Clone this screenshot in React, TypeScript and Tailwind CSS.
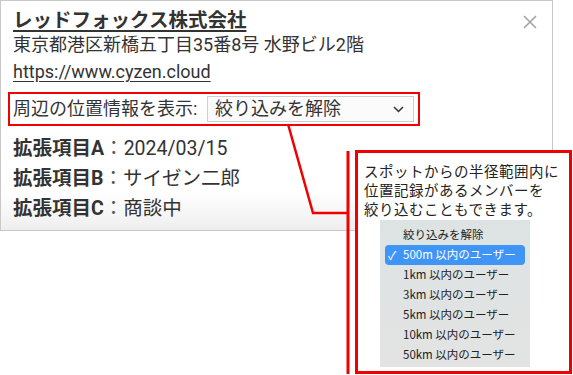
import React from 'react';

const fields = [
  { label: '拡張項目A', value: '2024/03/15' },
  { label: '拡張項目B', value: 'サイゼン二郎' },
  { label: '拡張項目C', value: '商談中' },
];

const options = [
  '絞り込みを解除',
  '500m 以内のユーザー',
  '1km 以内のユーザー',
  '3km 以内のユーザー',
  '5km 以内のユーザー',
  '10km 以内のユーザー',
  '50km 以内のユーザー',
];

const App = () => {
  return (
    <div className="relative w-[573px] h-[375px] bg-white overflow-hidden text-[#333] font-['Roboto','Noto_Sans_CJK_JP',sans-serif]">
      {/* info card */}
      <div className="w-[553px] h-[231px] border border-[#c9c9c9] bg-linear-to-b from-white from-[84%] to-[#eeeeee] px-[12px] pt-[8px]">
        <h1 className="text-[19.5px] leading-[24px] font-bold underline underline-offset-[3px] decoration-[1.5px]">
          レッドフォックス株式会社
        </h1>
        <p className="text-[18px] leading-[24px] whitespace-nowrap">東京都港区新橋五丁目35番8号 水野ビル2階</p>
        <p className="mt-[3px] text-[18px] leading-[24px] underline underline-offset-[3px]">
          https://www.cyzen.cloud
        </p>

        <div className="mt-[8px] -ml-[5px] w-[412px] h-[34px] border-2 border-[#f00000] flex items-center pl-[3px]">
          <span className="text-[18px] leading-[24px] whitespace-nowrap">周辺の位置情報を表示:</span>
          <div className="ml-auto mr-[4px] w-[207px] h-[26px] border border-[#cfcfcf] bg-[#fbfbfb] flex items-center justify-between pl-[7px] pr-[9px]">
            <span className="text-[18px] leading-[24px]">絞り込みを解除</span>
            <svg width="11" height="7" viewBox="0 0 11 7" fill="none">
              <path d="M1 1l4.5 4.5L10 1" stroke="#333" strokeWidth="1.5" />
            </svg>
          </div>
        </div>

        <div className="mt-[8px] flex flex-col">
          {fields.map(f => (
            <div key={f.label} className="flex items-center h-[30px] text-[19.5px]">
              <span className="font-bold">{f.label}</span>
              <span className="text-[#555]">：</span>
              <span>{f.value}</span>
            </div>
          ))}
        </div>
      </div>

      {/* close button */}
      <svg className="absolute left-[523px] top-[15px]" width="14" height="14" viewBox="0 0 14 14">
        <path d="M1 1l12 12M13 1L1 13" stroke="#a3a3a3" strokeWidth="1.6" />
      </svg>

      {/* connector lines */}
      <svg className="absolute left-0 top-0 pointer-events-none" width="573" height="375">
        <polyline points="288,124 313,213 348,213" fill="none" stroke="#f00000" strokeWidth="2.5" />
        <line x1="348" y1="151" x2="348" y2="374" stroke="#f00000" strokeWidth="3" />
      </svg>

      {/* callout */}
      <div className="absolute left-[355px] top-[150px] w-[217px] h-[224px] border-[3px] border-[#f00000] bg-white pl-[6px] pt-[8px] font-['Noto_Sans_CJK_JP',sans-serif]">
        <p className="text-[14.5px] leading-[19px] text-[#222] tracking-[0.5px]">
          スポットからの半径範囲内に
          <br />
          位置記録があるメンバーを
          <br />
          絞り込むこともできます。
        </p>
        <div className="mt-[2px] ml-[16px] w-[150px] bg-linear-to-b from-[#dde3e3] to-[#e3e3e3] pt-[5px] pb-[2px] px-[5px]">
          {options.map((o, i) => (
            <div
              key={o}
              className={
                i === 1
                  ? 'h-[20px] flex items-center rounded-[4px] bg-[#3f95f6] text-white text-[11.5px] pl-[3px]'
                  : 'h-[20px] flex items-center text-[#222] text-[11.5px] pl-[18px]'
              }
            >
              {i === 1 && <span className="w-[15px] text-[12px]">✓</span>}
              {o}
            </div>
          ))}
        </div>
      </div>
    </div>
  );
};

export default App;
